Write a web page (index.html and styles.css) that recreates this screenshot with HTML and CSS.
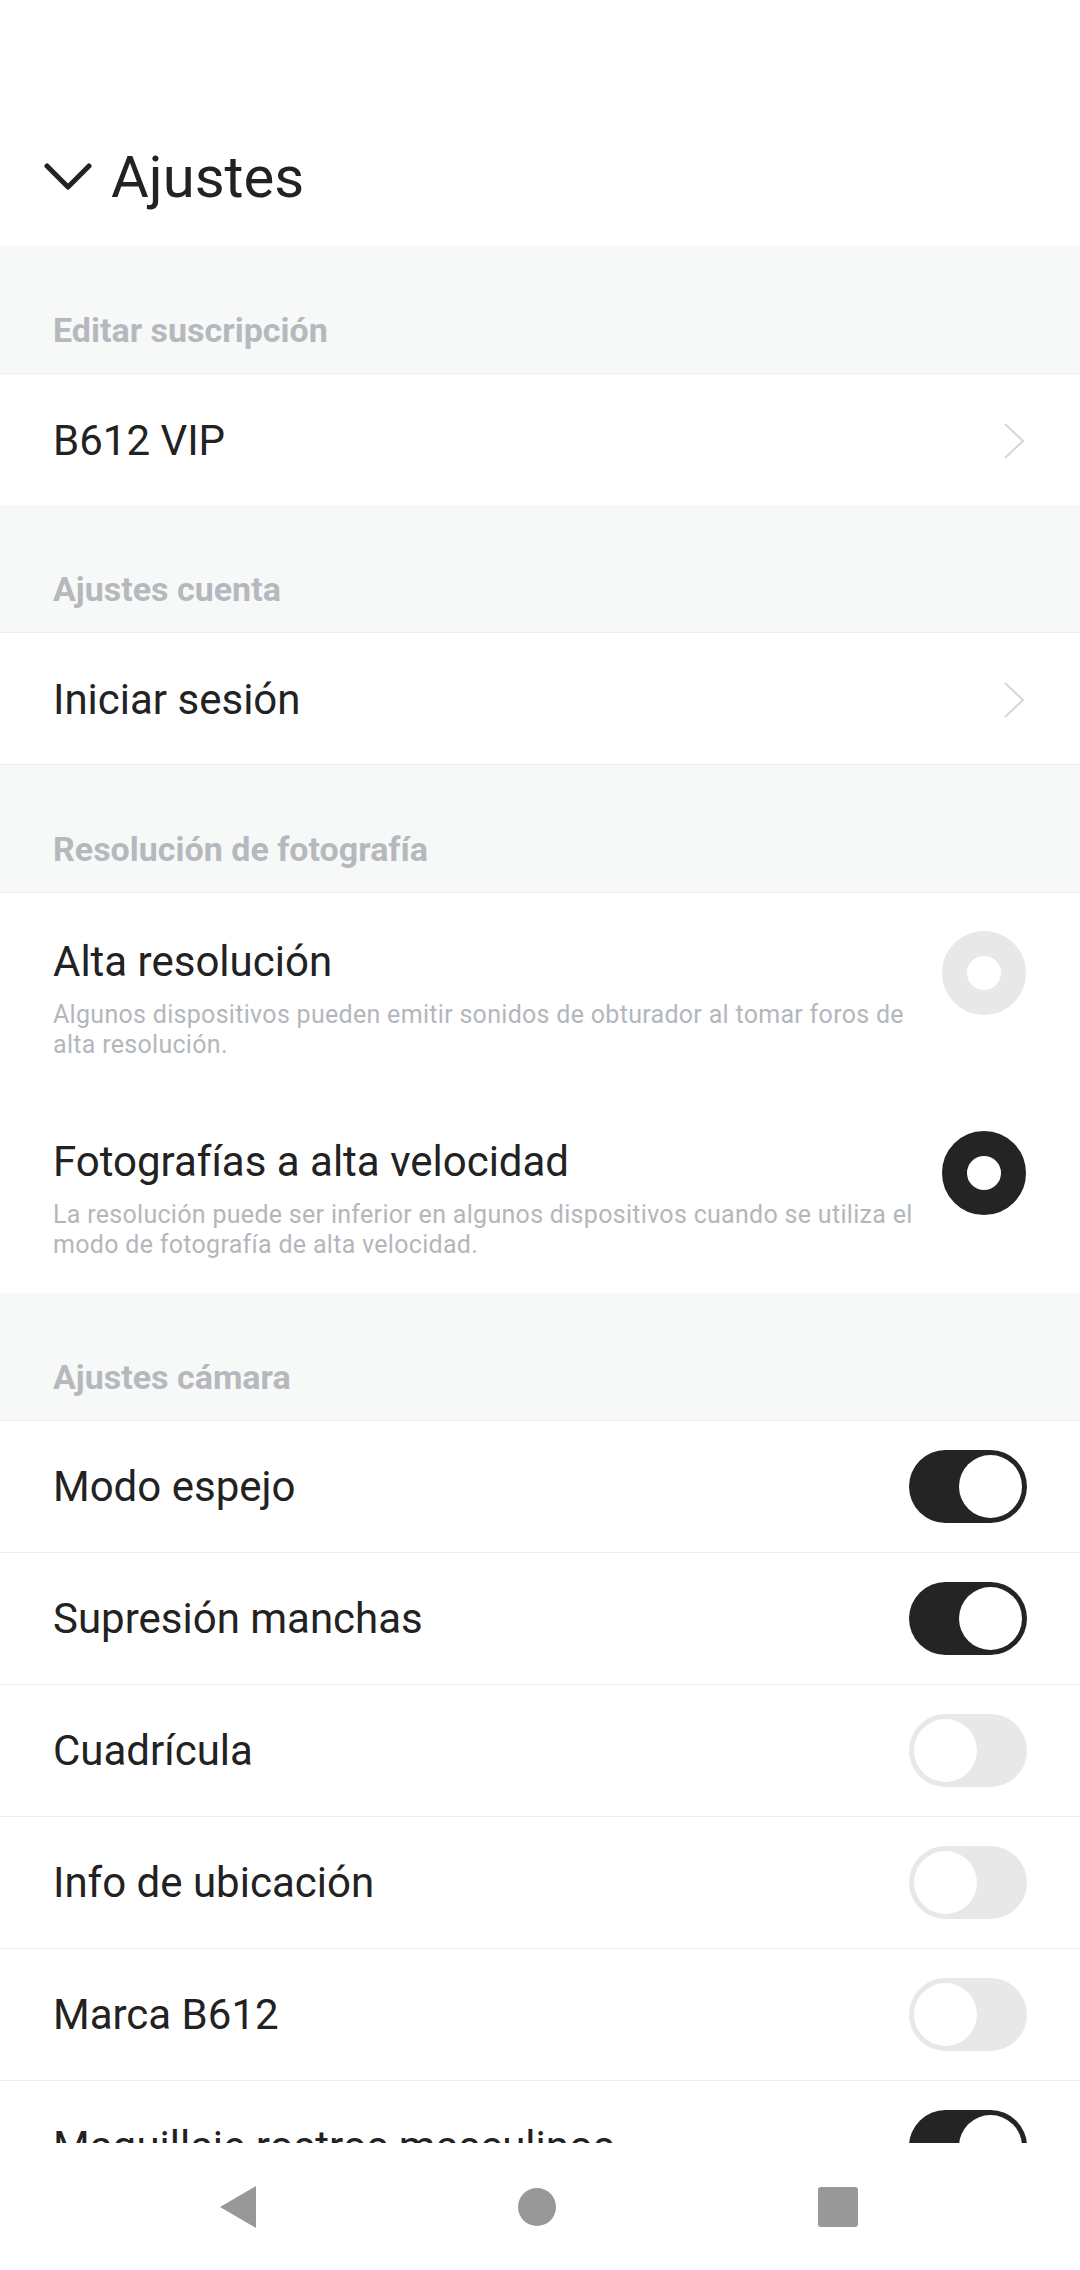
FILE: index.html
```html
<!DOCTYPE html>
<html lang="es">
<head>
<meta charset="utf-8">
<title>Ajustes</title>
<link rel="stylesheet" href="styles.css">
</head>
<body>
<div class="screen">
  <div class="content">
    <header class="top">
      <svg class="chev-down" viewBox="0 0 48 28" width="48" height="28"><path d="M3 3 L24 24 L45 3" fill="none" stroke="#222" stroke-width="5" stroke-linecap="round" stroke-linejoin="round"/></svg>
      <h1 class="title">Ajustes</h1>
    </header>

    <div class="sec-head">Editar suscripción</div>
    <div class="row link"><span class="label">B612 VIP</span>
      <svg class="chev-right" viewBox="0 0 22 36" width="22" height="36"><path d="M2 1 L20 18 L2 35" fill="none" stroke="#d6d6d6" stroke-width="2"/></svg>
    </div>

    <div class="sec-head">Ajustes cuenta</div>
    <div class="row link bordered"><span class="label">Iniciar sesión</span>
      <svg class="chev-right" viewBox="0 0 22 36" width="22" height="36"><path d="M2 1 L20 18 L2 35" fill="none" stroke="#d6d6d6" stroke-width="2"/></svg>
    </div>

    <div class="sec-head">Resolución de fotografía</div>
    <div class="row-radio">
      <div class="rtext">
        <div class="label">Alta resolución</div>
        <div class="sub">Algunos dispositivos pueden emitir sonidos de obturador al tomar foros de alta resolución.</div>
      </div>
      <span class="radio"></span>
    </div>
    <div class="row-radio">
      <div class="rtext">
        <div class="label">Fotografías a alta velocidad</div>
        <div class="sub">La resolución puede ser inferior en algunos dispositivos cuando se utiliza el modo de fotografía de alta velocidad.</div>
      </div>
      <span class="radio on"></span>
    </div>

    <div class="sec-head">Ajustes cámara</div>
    <div class="row bordered"><span class="label">Modo espejo</span><span class="toggle on"></span></div>
    <div class="row bordered"><span class="label">Supresión manchas</span><span class="toggle on"></span></div>
    <div class="row bordered"><span class="label">Cuadrícula</span><span class="toggle"></span></div>
    <div class="row bordered"><span class="label">Info de ubicación</span><span class="toggle"></span></div>
    <div class="row bordered"><span class="label">Marca B612</span><span class="toggle"></span></div>
    <div class="row bordered"><span class="label">Maquillaje rostros masculinos</span><span class="toggle on"></span></div>
  </div>

  <nav class="navbar">
    <svg viewBox="0 0 36 42" width="36" height="42"><path d="M36 0 L36 42 L0 21 Z" fill="#989898"/></svg>
    <svg viewBox="0 0 38 38" width="38" height="38"><circle cx="19" cy="19" r="19" fill="#989898"/></svg>
    <svg viewBox="0 0 40 40" width="40" height="40"><rect x="0" y="0" width="40" height="40" rx="3" fill="#989898"/></svg>
  </nav>
</div>
</body>
</html>
```
FILE: styles.css
```css
* { box-sizing: border-box; margin: 0; padding: 0; }
html, body { background: #fff; }
body {
  width: 1080px;
  height: 2270px;
  font-family: Roboto, "Noto Sans", "Liberation Sans", sans-serif;
  color: #222222;
  overflow: hidden;
}
.screen { display: flex; flex-direction: column; height: 2270px; }
.content { height: 2143px; overflow: hidden; }

.top {
  height: 246px;
  display: flex;
  align-items: flex-end;
  padding: 0 0 34px 44px;
  gap: 19px;
}
.chev-down { margin-bottom: 21px; }
.title {
  font-weight: 400;
  font-size: 58px;
  line-height: 70px;
  color: #222;
}

.sec-head {
  height: 128px;
  background: #f7f8f8;
  border-bottom: 1px solid #ededed;
  display: flex;
  align-items: flex-end;
  padding: 0 53px 23px;
  font-size: 34px;
  line-height: 40px;
  font-weight: 700;
  color: #b5b9be;
}

.row {
  height: 131px;
  display: flex;
  align-items: center;
  justify-content: space-between;
  padding: 0 53px 0 53px;
  background: #fff;
}
.row.link { padding-right: 55px; padding-top: 3px; }
.row.bordered { height: 132px; border-bottom: 1px solid #eeeeee; }
.label { font-size: 42px; line-height: 50px; color: #222; }

.row-radio {
  display: flex;
  align-items: flex-start;
  justify-content: space-between;
  padding: 44px 54px 33px 53px;
  height: 200px;
}
.rtext { width: 880px; }
.sub {
  margin-top: 13px;
  font-size: 25px;
  letter-spacing: 0.3px;
  line-height: 30px;
  color: #b3b7bc;
}
.radio {
  width: 84px;
  height: 84px;
  border-radius: 50%;
  border: 25px solid #e8e8e8;
  background: #fff;
  margin-top: -6px;
  flex: none;
}
.radio.on { border-color: #242424; }

.toggle {
  position: relative;
  width: 118px;
  height: 73px;
  border-radius: 37px;
  background: #e8e8e8;
  flex: none;
}
.toggle::after {
  content: "";
  position: absolute;
  top: 5px;
  left: 5px;
  width: 63px;
  height: 63px;
  border-radius: 50%;
  background: #fff;
}
.toggle.on { background: #242424; }
.toggle.on::after { left: 50px; }

.navbar {
  height: 127px;
  background: #fff;
  display: flex;
  align-items: center;
  justify-content: space-between;
  padding: 0 222px 0 220px;
}
```
